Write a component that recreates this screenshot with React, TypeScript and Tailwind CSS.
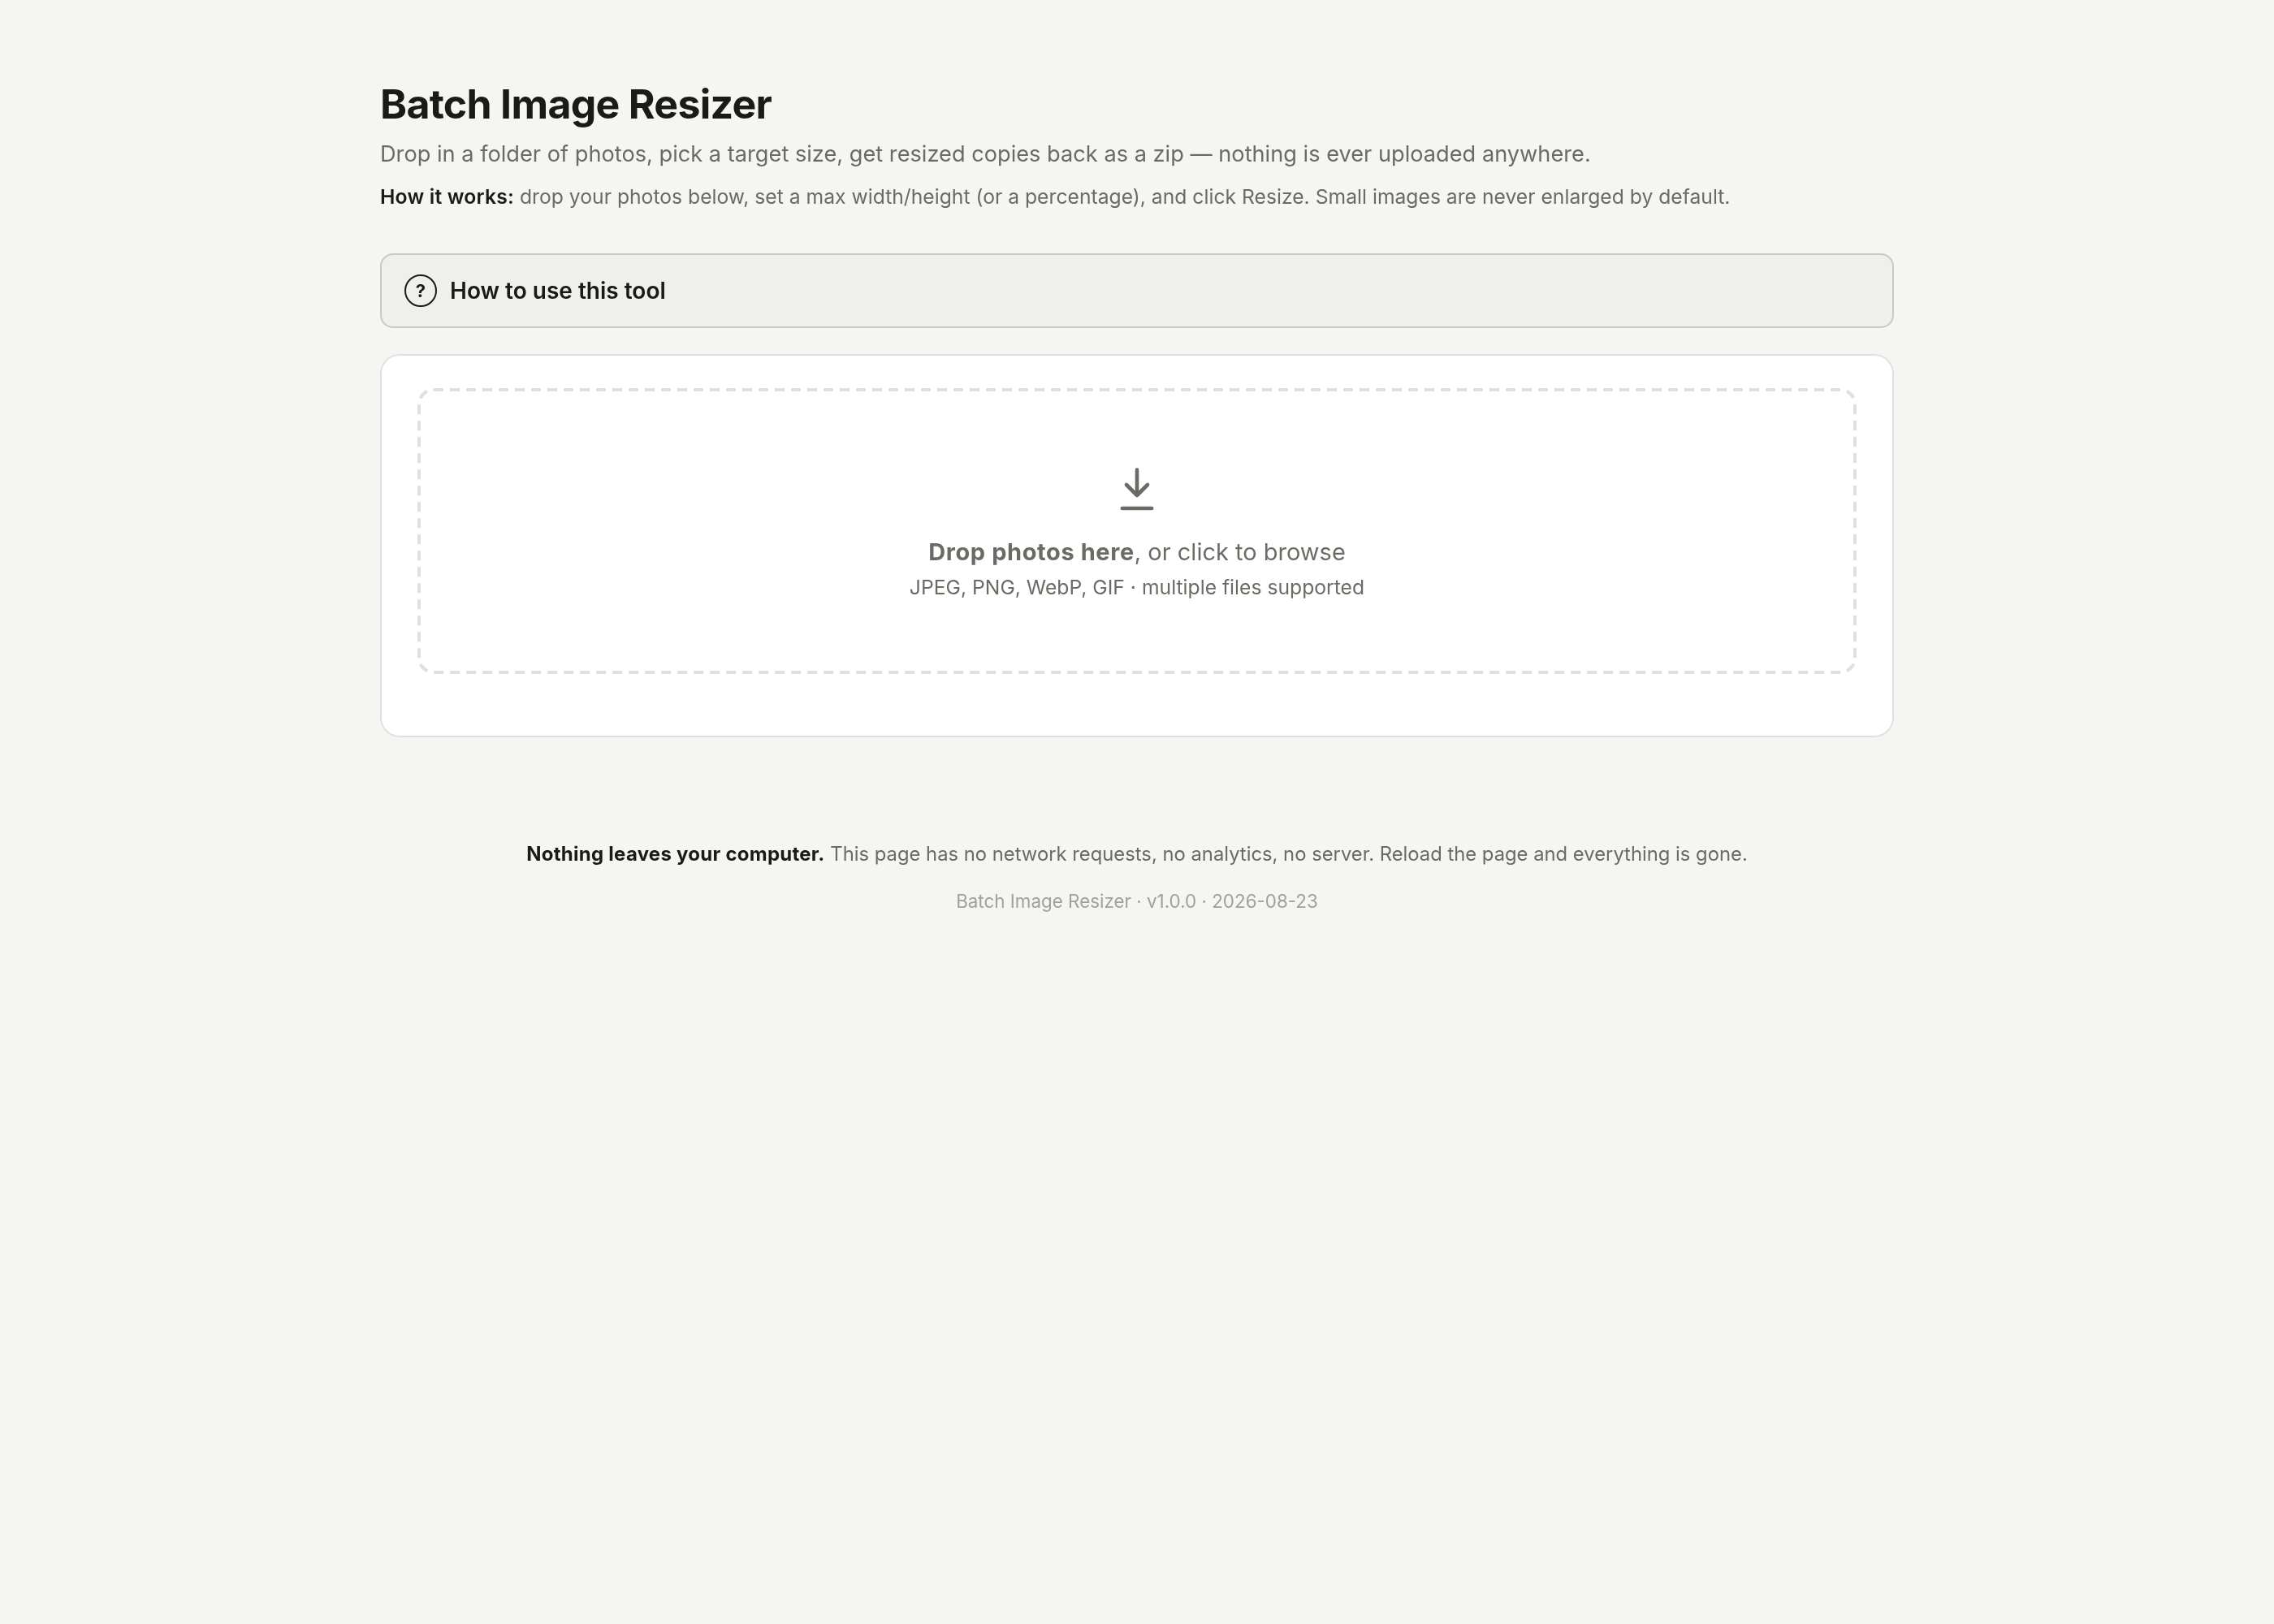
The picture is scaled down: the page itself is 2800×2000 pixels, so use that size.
const font = { fontFamily: 'Inter, "Liberation Sans", sans-serif' }

function UseGuide() {
  return (
    <div className="mb-[32px] flex h-[92px] items-center gap-[16px] rounded-[16px] border-2 border-[#c8c8c4] bg-[#efefed] px-[28px]">
      <span className="flex h-[40px] w-[40px] items-center justify-center rounded-full border-2 border-[#1a1a18] text-[22px] font-bold text-[#1a1a18]">
        ?
      </span>
      <span className="text-[28px] font-semibold text-[#1a1a18]">How to use this tool</span>
    </div>
  )
}

function DropZone() {
  return (
    <div className="relative flex h-[352px] flex-col items-center pt-[96px]">
      {/* drawn at half size and scaled so the dashes keep the 12/8 rhythm */}
      <div className="absolute top-0 left-0 h-1/2 w-1/2 origin-top-left scale-200 rounded-[10px] border-2 border-dashed border-[#e0e0dc]" />
      <svg width="44" height="56" viewBox="0 0 44 56" fill="none" stroke="#6b6b66" strokeWidth="4.6" strokeLinecap="round" strokeLinejoin="round">
        <path d="M22 4.5V36M9 23l13 13 13-13" />
        <path d="M3.8 52h36.4" />
      </svg>
      <p className="mt-[26px] text-[29px] leading-[48px] text-[#6b6b66]">
        <strong className="font-bold tracking-[0.6px]">Drop photos here</strong>, or click to browse
      </p>
      <p className="text-[24.7px] leading-[38px] text-[#6b6b66]">JPEG, PNG, WebP, GIF · multiple files supported</p>
    </div>
  )
}

export default function App() {
  return (
    <div className="min-h-screen bg-[#f5f5f3]" style={font}>
      <main className="mx-auto w-[1864px] pt-[96px] will-change-transform">
        <h1 className="text-[50px] leading-[64px] font-bold tracking-[-0.7px] text-[#1a1a18]">Batch Image Resizer</h1>
        <p className="mt-[8px] text-[27.2px] leading-[44px] text-[#6b6b66]">
          Drop in a folder of photos, pick a target size, get resized copies back as a zip — nothing is ever uploaded anywhere.
        </p>
        <p className="mt-[10px] mb-[50px] text-[24.7px] leading-[40px] text-[#6b6b66]">
          <strong className="font-semibold tracking-[0.2px] text-[#1a1a18]">How it works:</strong> drop your photos below, set a max width/height (or a percentage), and click Resize. Small images are never enlarged by default.
        </p>
        <UseGuide />
        <section className="h-[472px] rounded-[24px] border-2 border-[#e0e0dc] bg-white px-[44px] pt-[40px]">
          <DropZone />
        </section>
        <footer className="mt-[124px] text-center">
          <p className="text-[23.8px] leading-[40px] text-[#6b6b66]">
            <strong className="text-[24px] font-bold tracking-[0.25px] text-[#1a1a18]">Nothing leaves your computer.</strong> This page has no network requests, no analytics, no server. Reload the page and everything is gone.
          </p>
          <p className="mt-[20px] text-[22.4px] leading-[36px] text-[#a0a09c]">Batch Image Resizer · v1.0.0 · 2026-08-23</p>
        </footer>
      </main>
    </div>
  )
}
